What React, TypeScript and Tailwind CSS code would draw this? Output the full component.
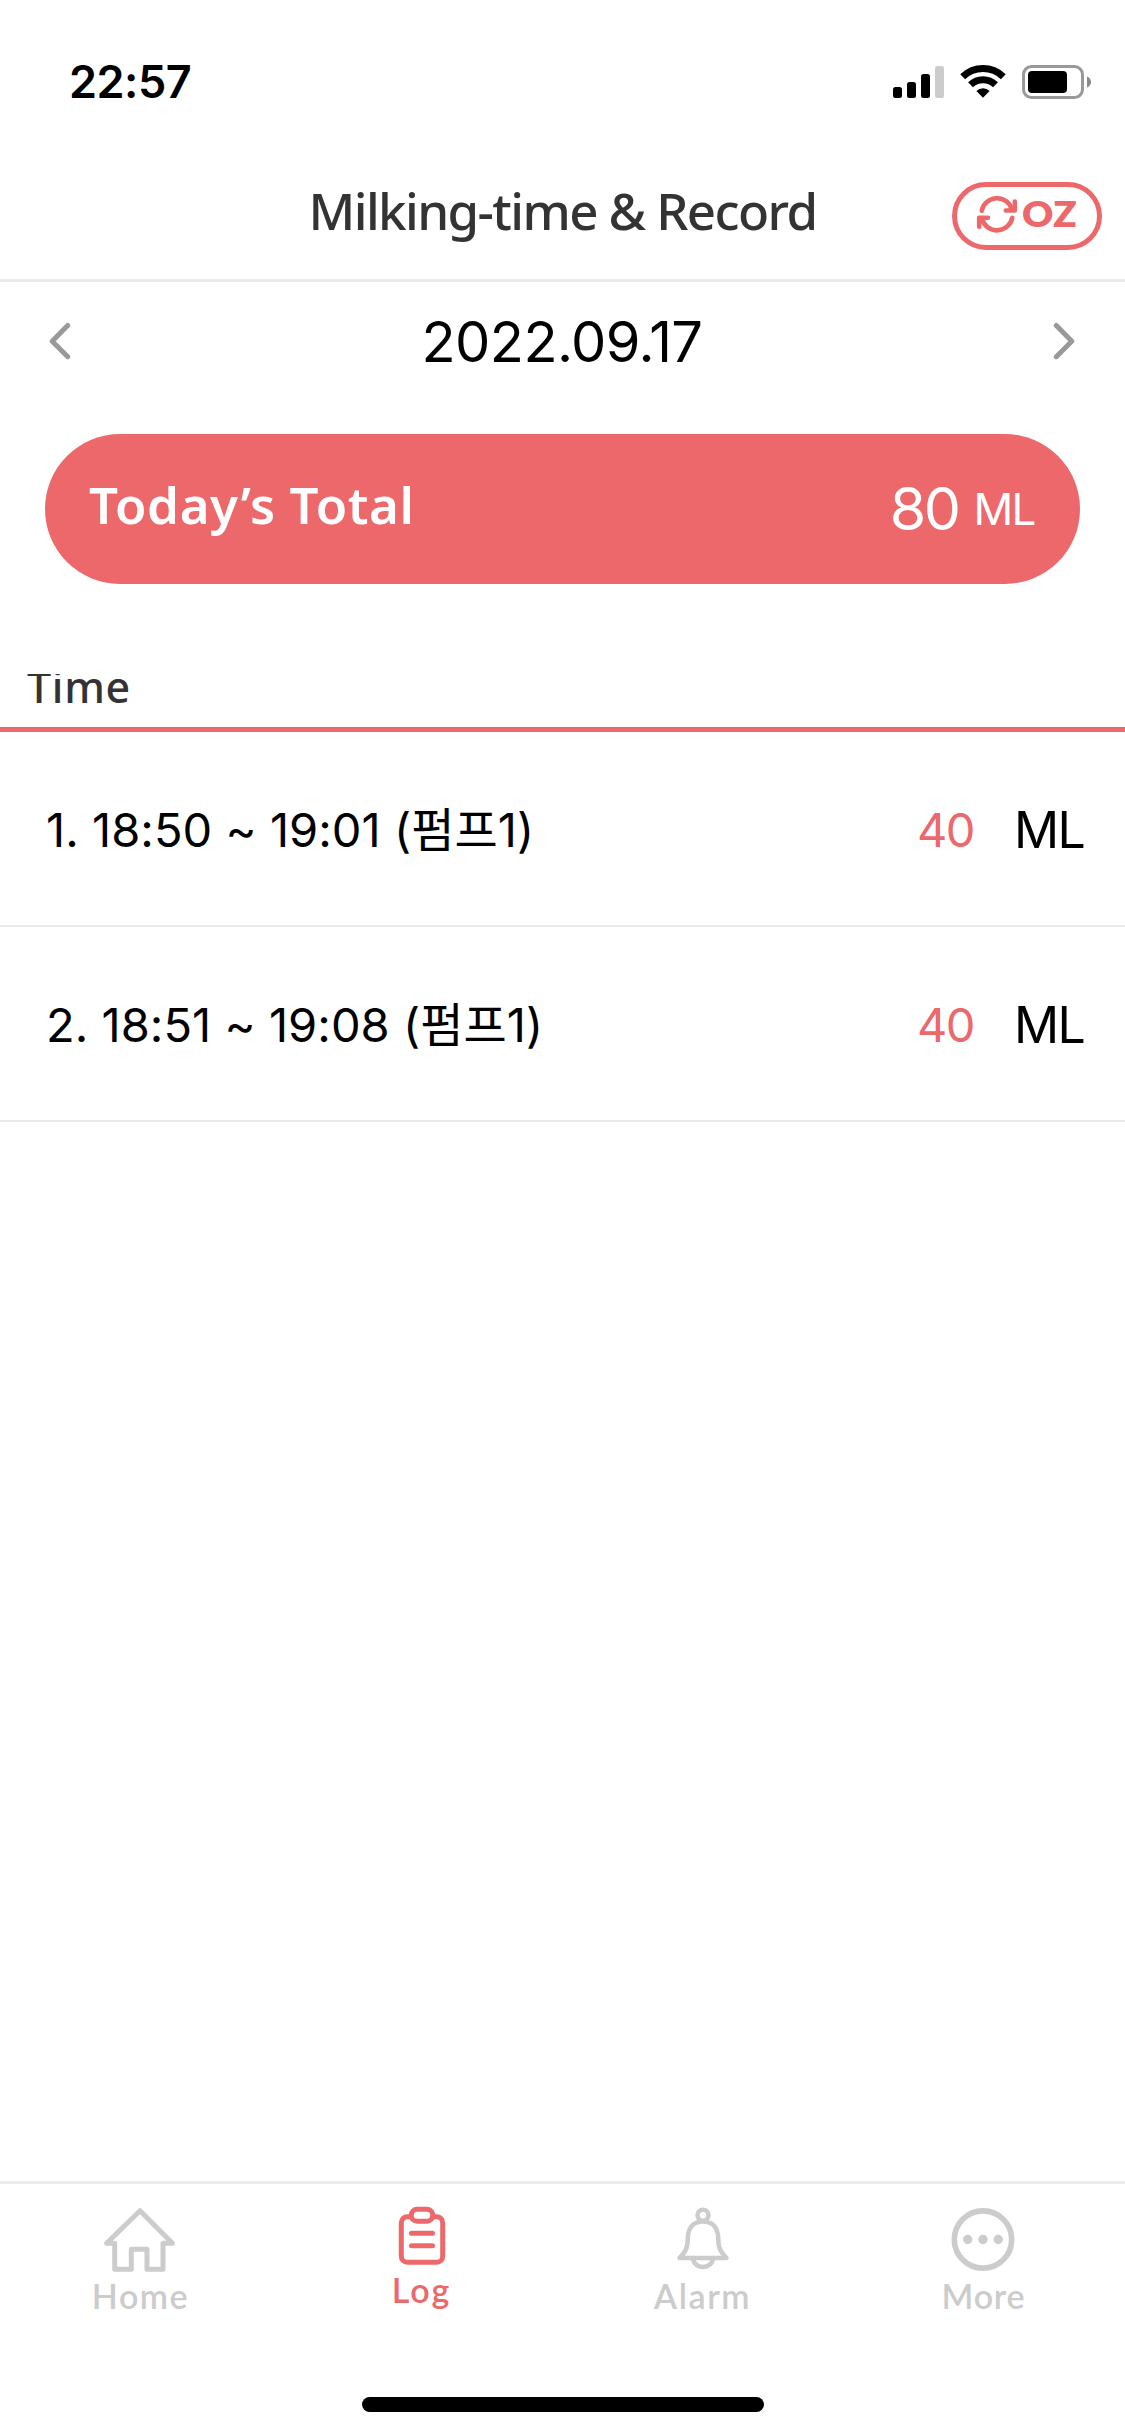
import React from "react";

const sf = "font-['Inter','Noto_Sans_CJK_KR',sans-serif]";

function StatusIcons() {
  return (
    <svg width="200" height="36" viewBox="892 64 200 36" fill="none">
      <rect x="893" y="87" width="9" height="11" rx="2.5" fill="#000" />
      <rect x="907" y="82" width="9" height="16" rx="2.5" fill="#000" />
      <rect x="921" y="74" width="9" height="24" rx="2.5" fill="#000" />
      <rect x="935" y="66" width="9" height="32" rx="2.5" fill="#ccc" />
      <path d="M962.7 76.7a29.2 29.2 0 0 1 40.6 0" stroke="#000" strokeWidth="7" />
      <path d="M970.5 84.7a18 18 0 0 1 25 0" stroke="#000" strokeWidth="7" />
      <path d="M983 97.8l-6.6-6.8a9.6 9.6 0 0 1 13.2 0z" fill="#000" />
      <rect x="1023.5" y="66.5" width="59" height="31" rx="8" stroke="#999" strokeWidth="3" />
      <rect x="1028" y="71" width="39" height="22" rx="4" fill="#000" />
      <path d="M1087 76.500q4 1.800 4 5.500t-4 5.500z" fill="#8a8a8a" />
    </svg>
  );
}

function RefreshIcon() {
  return (
    <svg width="54" height="48" viewBox="0 0 54 48" fill="none" stroke="#ed686b" strokeWidth="4.600" strokeLinecap="round" strokeLinejoin="round">
      <path d="M11.700 20.800A15.600 15.600 0 0 1 42 19.500" />
      <path d="M44.800 11.600V20.500H35.800" />
      <path d="M42.300 27.800A15.600 15.600 0 0 1 12 29" />
      <path d="M9.200 36.800V27.800H18" />
    </svg>
  );
}

function Chevron({ flip = false }: { flip?: boolean }) {
  return (
    <svg width="22" height="38" viewBox="0 0 22 38" fill="none" className={flip ? "-scale-x-100" : ""}>
      <path d="M18.700 3.500L3.200 19.300L18.700 34.700" stroke="#989998" strokeWidth="5" strokeLinecap="round" strokeLinejoin="round" />
    </svg>
  );
}

function Row({ label, amount }: { label: string; amount: string }) {
  return (
    <li className="flex h-[195px] items-start justify-between border-b-2 border-[#e9e9e9] pt-[74px] pr-[41px] pl-[46px]">
      <span className={`${sf} text-[47px] leading-[48px] tracking-[0.050px] whitespace-pre text-black`}>{label}</span>
      <span className={`${sf} flex items-start`}>
        <span className="mr-[40px] text-[47px] leading-[48px] tracking-[-1.500px] text-[#ed686b]">{amount}</span>
        <span className="text-[50px] leading-[48px] tracking-[-1.700px] text-black">ML</span>
      </span>
    </li>
  );
}

function Tab({ label, active, tracking, children }: { label: string; active?: boolean; tracking: string; children: React.ReactNode }) {
  return (
    <a className={`flex w-[281px] flex-col items-center pt-[16px] ${active ? "text-[#ed686b]" : "text-[#ccc]"}`}>
      <span className={active ? "h-[74px]" : "h-[80px]"}>{children}</span>
      <span className={`font-['Lato',sans-serif] text-[34px] leading-[32px] font-semibold ${tracking}`}>{label}</span>
    </a>
  );
}

export default function App() {
  return (
    <div className="flex h-[2436px] w-[1125px] flex-col overflow-hidden bg-white">
      <div className="flex h-[164px] items-start justify-between pt-[59px] pr-[33px] pl-[69px]">
        <span className={`${sf} text-[45px] leading-[45px] font-semibold tracking-[-0.500px] text-black`}>22:57</span>
        <span className="pt-[5px]"><StatusIcons /></span>
      </div>

      <header className="relative flex h-[118px] items-start justify-center border-b-[3px] border-[#ebebeb] pt-[21px]">
        <h1 className="font-['Noto_Sans',sans-serif] text-[51px] leading-[51px] font-medium tracking-[-1.600px] whitespace-nowrap text-[#333]">
          Milking-time &amp; Record
        </h1>
        <button className="absolute top-[18px] right-[23px] flex h-[68px] w-[150px] items-start rounded-full border-[5px] border-[#ed686b] pt-[3px] pl-[13px]">
          <RefreshIcon />
          <span className="-ml-[2px] origin-left scale-x-110 font-['Lato',sans-serif] text-[35px] leading-[47px] font-extrabold tracking-[0.500px] text-[#ed686b]">OZ</span>
        </button>
      </header>

      <div className="flex h-[152px] items-start justify-between pt-[40px] pr-[50px] pl-[49px]">
        <Chevron />
        <span className={`${sf} -mt-[8px] text-[56px] leading-[56px] tracking-[-0.600px] text-black`}>2022.09.17</span>
        <Chevron flip />
      </div>

      <section className="mx-[45px] flex h-[150px] shrink-0 items-start justify-between rounded-full bg-[#ed686b] pr-[45px] pl-[44px] text-white">
        <h2 className="pt-[45px] font-['Noto_Sans',sans-serif] text-[51px] leading-[51px] font-semibold tracking-[0.600px]">Today’s Total</h2>
        <span className={`${sf} flex items-start`}>
          <span className="pt-[45px] text-[59px] leading-[59px] tracking-[-2.500px]">80</span>
          <span className="pt-[53px] pl-[15px] text-[44px] leading-[44px] tracking-[-1.500px]">ML</span>
        </span>
      </section>

      <div className="flex h-[148px] shrink-0 flex-col justify-end border-b-[5px] border-[#ed686b] pl-[27px]">
        <div className="h-[53px] overflow-hidden">
          <h3 className="-mt-[9px] font-['Noto_Sans',sans-serif] text-[43px] leading-[43px] font-medium tracking-[0.700px] text-[#333]">Time</h3>
        </div>
      </div>

      <ul className="grow">
        <Row label="1. 18:50 ~ 19:01 (펌프1)" amount="40" />
        <Row label="2. 18:51 ~ 19:08 (펌프1)" amount="40" />
      </ul>

      <nav className="flex h-[216px] shrink-0 border-t-[3px] border-[#ebebeb]">
        <Tab label="Home" tracking="tracking-[1.500px]">
          <svg width="80" height="76" viewBox="1 0 80 76" fill="none" stroke="currentColor" strokeWidth="5" strokeLinejoin="round">
            <path d="M40 10.700L6.600 43.300H14.700V69.300H31.300V49.300H47V69.300H63V43.300H72.400Z" />
          </svg>
        </Tab>
        <Tab label="Log" active tracking="tracking-[2px]">
          <svg width="54" height="70" viewBox="0 0 54 70" fill="none" stroke="currentColor" strokeWidth="5" strokeLinecap="round">
            <path d="M16 16.700H12.300a6 6 0 0 0-6 6V56.300a6 6 0 0 0 6 6H41.700a6 6 0 0 0 6-6V22.700a6 6 0 0 0-6-6H38" />
            <rect x="16.200" y="9.300" width="21.600" height="12" rx="6" />
            <path d="M16.500 33.300H37.500M16.500 45.700H37.500" />
          </svg>
        </Tab>
        <Tab label="Alarm" tracking="tracking-[1.600px]">
          <svg width="66" height="76" viewBox="0 0 66 76" fill="none" stroke="currentColor" strokeWidth="4.500" strokeLinejoin="round">
            <circle cx="33" cy="15.200" r="5.500" />
            <path d="M33 21.500C23.500 21.500 18.200 27.500 17.800 38C17.800 48 15.500 52 9.500 58H56.500C50.500 52 48.200 48 48.200 38C47.800 27.500 42.500 21.500 33 21.500Z" />
            <path d="M23 59.500a10.200 9.400 0 0 0 20 0" />
          </svg>
        </Tab>
        <Tab label="More" tracking="tracking-[0.800px]">
          <svg width="70" height="76" viewBox="1 0 70 76" fill="currentColor">
            <circle cx="35" cy="39.500" r="28.700" fill="none" stroke="currentColor" strokeWidth="5.700" />
            <circle cx="19.700" cy="39.500" r="4.700" />
            <circle cx="35" cy="39.500" r="4.700" />
            <circle cx="50.200" cy="39.500" r="4.700" />
          </svg>
        </Tab>
      </nav>

      <div className="flex h-[39px] shrink-0 justify-center">
        <div className="h-[15px] w-[402px] rounded-full bg-black" />
      </div>
    </div>
  );
}
